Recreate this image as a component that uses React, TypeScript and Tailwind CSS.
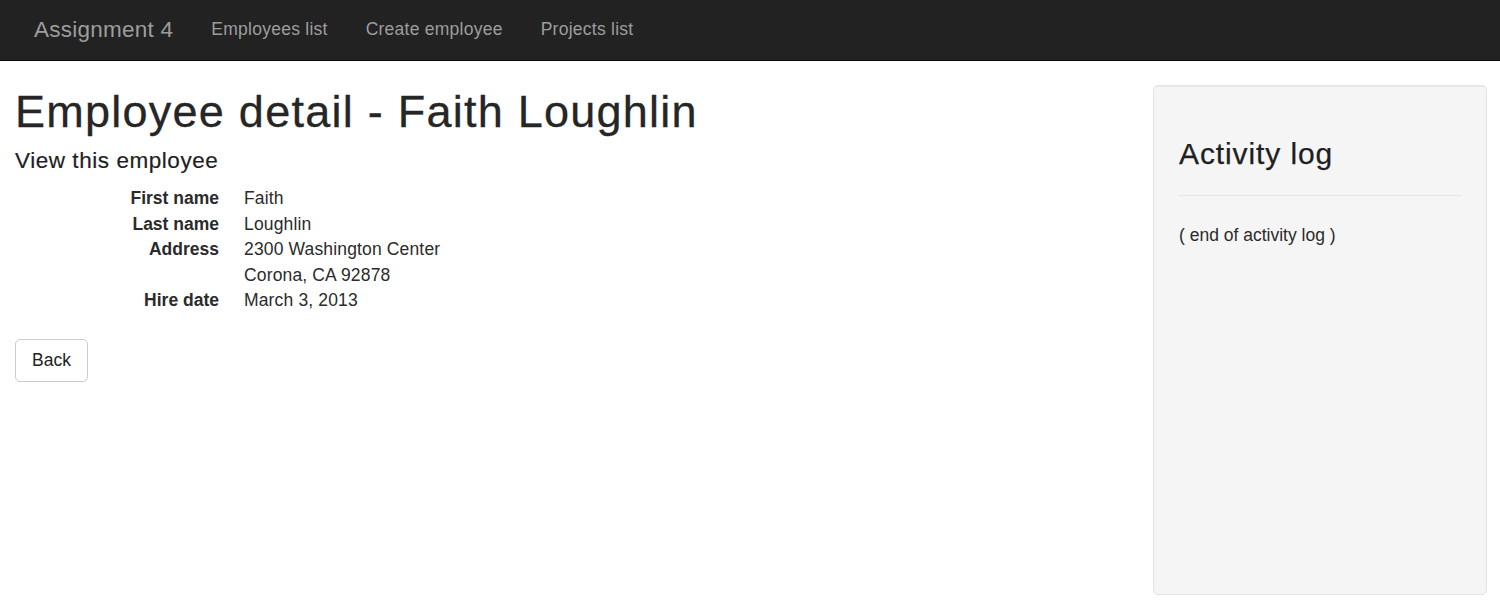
import React from 'react';

const navLinks = ['Employees list', 'Create employee', 'Projects list'];

const details: { label: string; lines: string[] }[] = [
  { label: 'First name', lines: ['Faith'] },
  { label: 'Last name', lines: ['Loughlin'] },
  { label: 'Address', lines: ['2300 Washington Center', 'Corona, CA 92878'] },
  { label: 'Hire date', lines: ['March 3, 2013'] },
];

const App = (): JSX.Element => {
  return (
    <div className="min-h-[604px] bg-white text-[#2b2b2b] font-['Liberation_Sans',Arial,sans-serif] text-[17.5px] leading-[25.5px]">
      <nav className="h-[61px] bg-[#222] border-b border-[#080808] flex items-center px-[15px]">
        <a className="px-[19px] text-[22.5px] text-[#9d9d9d] tracking-[0.25px]" href="#">
          Assignment 4
        </a>
        <ul className="flex">
          {navLinks.map((link) => (
            <li key={link}>
              <a className="px-[19px] text-[#9d9d9d] tracking-[0.25px]" href="#">
                {link}
              </a>
            </li>
          ))}
        </ul>
      </nav>

      <div className="flex">
        <div className="flex-1 px-[15px]">
          <h1 className="mt-[26px] text-[45px] leading-[1.1] tracking-[1.25px] font-normal text-[#262626] [-webkit-text-stroke:0.3px_#262626]">
            Employee detail - Faith Loughlin
          </h1>
          <h4 className="mt-[12px] text-[22.5px] leading-[1.1] tracking-[0.55px] text-[#1f1f1f] [-webkit-text-stroke:0.2px_#1f1f1f]">
            View this employee
          </h4>
          <dl className="mt-[13px] grid grid-cols-[204px_1fr] gap-x-[25px] tracking-[0.15px]">
            {details.map((d) => (
              <React.Fragment key={d.label}>
                <dt className="text-right font-bold tracking-normal">{d.label}</dt>
                <dd>
                  {d.lines.map((l) => (
                    <div key={l}>{l}</div>
                  ))}
                </dd>
              </React.Fragment>
            ))}
          </dl>
          <button className="mt-[25.5px] h-[43px] px-4 border border-[#ccc] rounded-[5px] bg-white text-[#222]">
            Back
          </button>
        </div>

        <aside className="w-[334px] h-[510px] mt-[24px] mr-[13px] bg-[#f5f5f5] border border-[#e3e3e3] rounded-[5px] shadow-[inset_0_1px_1px_rgba(0,0,0,0.05)] px-[25px] pt-[51px]">
          <h3 className="text-[30px] leading-[1.1] tracking-[0.9px] text-[#1f1f1f] [-webkit-text-stroke:0.25px_#1f1f1f]">
            Activity log
          </h3>
          <hr className="mt-[25px] border-t border-[#e6e6e6]" />
          <p className="mt-[27px]">( end of activity log )</p>
        </aside>
      </div>
    </div>
  );
};

export default App;
